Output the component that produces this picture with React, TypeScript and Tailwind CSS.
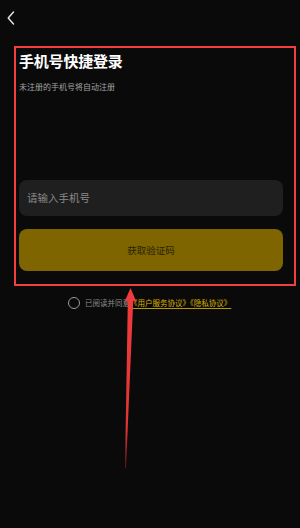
import React from 'react';

const FONT = { fontFamily: '"Noto Sans CJK SC", "Noto Sans", sans-serif' };

export default function App() {
    return (
        <div className="relative w-[300px] h-[528px] overflow-hidden bg-[#0a0a0a]" style={FONT}>
            {/* Header */}
            <div className="h-[36px] pl-[7px] pt-[11px]">
                <svg width="8" height="14" viewBox="0 0 8 14" fill="none">
                    <path d="M6.5 1 L1.2 7 L6.5 13" stroke="#e8e8e8" strokeWidth="1.4" strokeLinecap="round" strokeLinejoin="round" />
                </svg>
            </div>

            {/* Login form */}
            <div className="flex flex-col pl-[19px] pr-[17px] pt-[15px]">
                <h1 className="text-[15px] leading-[20px] font-bold text-white tracking-[-0.2px]">手机号快捷登录</h1>
                <p className="mt-[10px] text-[8px] leading-[12px] text-[#a3a3a3]">未注册的手机号将自动注册</p>

                <div className="mt-[87px] h-[36px] rounded-[8px] bg-[#1f1f1f] flex items-center pl-[8px]">
                    <span className="text-[10.5px] text-[#8a8a8a]">请输入手机号</span>
                </div>

                <button className="mt-[13px] h-[42px] rounded-[8px] bg-[#7f6500] flex items-center justify-center">
                    <span className="text-[9.5px] text-[#2b2300]">获取验证码</span>
                </button>

                <div className="mt-[26px] flex items-center gap-[5px] pl-[49px]">
                    <span className="w-[12px] h-[12px] rounded-full border border-[#9a9a9a] shrink-0" />
                    <span className="text-[7.5px] leading-[12px] text-[#8c8c8c]">
                        已阅读并同意
                        <span className="text-[#d9b400] underline decoration-[#b89a00] underline-offset-[2px]">《用户服务协议》《隐私协议》</span>
                    </span>
                </div>
            </div>

            {/* Annotation box */}
            <div className="absolute left-[14px] top-[46px] w-[282px] h-[240px] border-2 border-[#f24040] pointer-events-none" />

            {/* Annotation arrow */}
            <svg className="absolute inset-0 pointer-events-none" width="300" height="528" viewBox="0 0 300 528">
                <defs>
                    <linearGradient id="shaft" x1="0" y1="289" x2="0" y2="468" gradientUnits="userSpaceOnUse">
                        <stop offset="0" stopColor="#f23c3c" />
                        <stop offset="0.8" stopColor="#e03434" />
                        <stop offset="1" stopColor="#5a1414" />
                    </linearGradient>
                </defs>
                <path d="M130.5 288 L136.5 302 L133.2 301 L126 468 L125 468 L127.8 301 L124.5 302 Z" fill="url(#shaft)" />
            </svg>
        </div>
    );
}
